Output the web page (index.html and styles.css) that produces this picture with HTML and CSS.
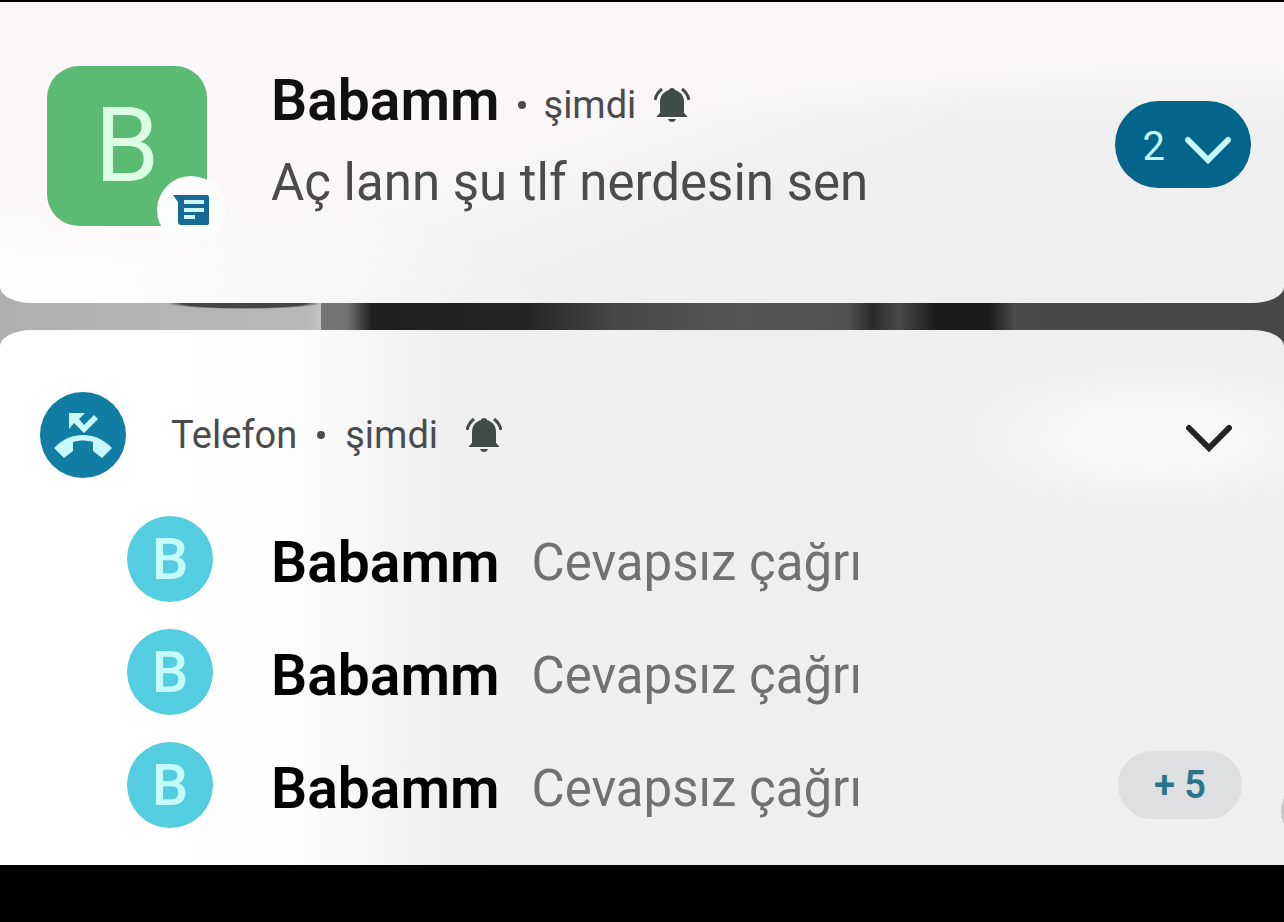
FILE: index.html
```html
<!DOCTYPE html>
<html lang="tr">
<head>
    <meta charset="UTF-8">
    <meta name="viewport" content="width=device-width, initial-scale=1.0">
    <title>Bildirimler</title>
    <link rel="stylesheet" href="styles.css">
</head>
<body>

<svg class="sprite" aria-hidden="true">
    <symbol id="bell" viewBox="0 0 36 36">
        <path d="M18 1c2 0 3 1 3 2 6 2 9 6 9 12v11l3 3v1H3v-1l3-3V15C6 9 9 5 15 3c0-1 1-2 3-2z" fill="currentColor"/>
        <path d="M14 32h8c-1 4-7 4-8 0z" fill="currentColor"/>
        <path d="M8 2C4 5 2 8 1 13M28 2c4 3 6 6 7 11" fill="none" stroke="currentColor" stroke-width="3"/>
    </symbol>
    <symbol id="chevron" viewBox="0 0 46 36">
        <path d="M3 11l20 20 20-20" fill="none" stroke="currentColor" stroke-width="6" stroke-linecap="round"/>
    </symbol>
</svg>

<main class="shade">
    <section class="card message">
        <div class="contact">
            <span>B</span>
            <div class="app-badge">
                <svg viewBox="0 0 36 30" width="36" height="30">
                    <path d="M0 0h34q2 0 2 2v26q0 2-2 2H8q-3 0-3-3V7z" fill="#176a92"/>
                    <path d="M11 7h20M11 15h20M11 22h11" stroke="#c9f6ff" stroke-width="4"/>
                </svg>
            </div>
        </div>
        <div class="message-body">
            <div class="title">
                <h2 class="name">Babamm</h2>
                <span class="dot"></span>
                <span class="meta">şimdi</span>
                <svg class="bell"><use href="#bell"/></svg>
            </div>
            <p class="text">Aç lann şu tlf nerdesin sen</p>
        </div>
        <button type="button" class="expand-count" aria-label="2 mesajı genişlet">
            2
            <svg class="chevron"><use href="#chevron"/></svg>
        </button>
    </section>

    <section class="card calls">
        <header class="calls-header">
            <div class="app-icon">
                <svg viewBox="0 0 86 86" width="86" height="86">
                    <path d="M14 56C24 46 33 43 43 43s19 3 29 13L62 66l-9-7v-9c-7-2-13-2-20 0v9l-9 7z" fill="#c8f9ff"/>
                    <path d="M29 21h16l-6 6 5 6 10-10 4 4-14 14-10-10-5 6z" fill="#c8f9ff"/>
                </svg>
            </div>
            <h3 class="meta">Telefon</h3>
            <span class="dot"></span>
            <span class="meta">şimdi</span>
            <svg class="bell"><use href="#bell"/></svg>
            <button type="button" class="expand" aria-label="Genişlet">
                <svg class="chevron"><use href="#chevron"/></svg>
            </button>
        </header>
        <ul class="call-list">
            <li>
                <span class="avatar">B</span>
                <strong class="name">Babamm</strong>
                <span class="status">Cevapsız çağrı</span>
            </li>
            <li>
                <span class="avatar">B</span>
                <strong class="name">Babamm</strong>
                <span class="status">Cevapsız çağrı</span>
            </li>
            <li>
                <span class="avatar">B</span>
                <strong class="name">Babamm</strong>
                <span class="status">Cevapsız çağrı</span>
                <button type="button" class="more">+ 5</button>
            </li>
        </ul>
        <span class="edge-handle"></span>
    </section>
</main>

</body>
</html>
```
FILE: styles.css
```css
* {
    box-sizing: border-box;
}

body {
    margin: 0;
    background-color: #000000;
    font-family: Roboto, "Liberation Sans", sans-serif;
    color: #4a4b4d;
}

h2, h3, p, ul {
    margin: 0;
    padding: 0;
}

button {
    border: none;
    padding: 0;
    font-family: inherit;
    cursor: pointer;
}

.sprite {
    display: none;
}

/* wallpaper shows between the cards */
.shade {
    display: flex;
    flex-direction: column;
    gap: 27px;
    margin-top: 2px;
    background:
        radial-gradient(ellipse 6% 6px at 19% 301px, #444444 80%, transparent),
        linear-gradient(to right, #b0b0b0 0%, #b8b8b8 24%, #c4c4c4 25%, #747474 25%, #747474 27%, #202020 29%, #242625 41%, #464847 48%, #555755 58%, #505050 66%, #2b2b2b 68%, #484848 70%, #1a1a1a 73%, #1a1a1a 77%, #4b494b 79%, #484848 100%);
}

.card {
    position: relative;
    overflow: hidden;
}

.message {
    display: flex;
    align-items: flex-start;
    padding: 64px 33px 77px 47px;
    border-radius: 0 0 32px 32px / 0 0 16px 16px;
    background:
        radial-gradient(ellipse at 0% 100%, #ffffff 0%, transparent 30%),
        linear-gradient(to bottom, #fbf7f8 15%, transparent 40%),
        linear-gradient(160deg, #fbf8f9 0%, #fbf7f8 40%, #f0f0f1 60%, #efeff0 100%);
}

.contact {
    position: relative;
    display: flex;
    align-items: center;
    justify-content: center;
    width: 160px;
    height: 160px;
    margin-right: 64px;
    border-radius: 32px;
    background-color: #5bbb75;
    color: #dcffe4;
    font-size: 104px;
    line-height: 160px;
}

.app-badge {
    position: absolute;
    right: -18px;
    bottom: -18px;
    display: flex;
    align-items: center;
    justify-content: center;
    width: 68px;
    height: 68px;
    border-radius: 50%;
    background-color: #fcfdfd;
}

.message-body {
    flex: 1;
    padding-top: 3px;
}

.title {
    display: flex;
    align-items: center;
}

.name {
    font-size: 57px;
    font-weight: 600;
    line-height: 64px;
    color: #111111;
}

.dot {
    width: 8px;
    height: 8px;
    margin: 0 18px;
    border-radius: 50%;
    background-color: #4a4b4d;
}

.meta {
    font-size: 38px;
    font-weight: 400;
    line-height: 48px;
}

.bell {
    width: 36px;
    height: 36px;
    margin-left: 18px;
    color: #414b49;
}

.title .dot,
.title .meta,
.title .bell {
    margin-top: 8px;
}

.text {
    padding-top: 18px;
    font-size: 51px;
    line-height: 64px;
}

.chevron {
    width: 46px;
    height: 36px;
}

.expand-count {
    display: flex;
    align-items: center;
    justify-content: flex-end;
    gap: 20px;
    width: 136px;
    height: 87px;
    margin-top: 35px;
    padding: 4px 20px 0 0;
    border-radius: 44px;
    background-color: #04658a;
    color: #c8f9ff;
    font-size: 40px;
}

.calls {
    padding: 62px 42px 37px 40px;
    border-radius: 32px 32px 0 0 / 16px 16px 0 0;
    background:
        radial-gradient(ellipse 200px 80px at 90% 20%, #f8f8f9 30%, transparent),
        linear-gradient(to right, #ffffff 0%, #fefefe 22%, #f1f0f1 34%, #efefef 60%, #f0eff0 100%);
}

.calls-header {
    display: flex;
    align-items: center;
}

.app-icon {
    display: flex;
    width: 86px;
    height: 86px;
    margin-right: 45px;
    border-radius: 50%;
    background-color: #127da4;
}

.calls-header .dot {
    margin: 0 20px;
}

.calls-header .bell {
    margin-left: 28px;
}

.expand {
    display: flex;
    margin-left: auto;
    margin-right: 10px;
    background: none;
    color: #222426;
}

.call-list {
    display: flex;
    flex-direction: column;
    gap: 27px;
    padding: 38px 0 0 87px;
    list-style: none;
}

.call-list li {
    display: flex;
    align-items: center;
}

.call-list .name {
    padding-top: 8px;
    color: #000000;
}

.avatar {
    width: 86px;
    height: 86px;
    margin-right: 58px;
    border-radius: 50%;
    background-color: #54cde0;
    color: #c5fbfa;
    font-size: 58px;
    font-weight: 500;
    line-height: 86px;
    text-align: center;
}

.status {
    padding-top: 8px;
    margin-left: 32px;
    font-size: 51px;
    line-height: 64px;
    color: #707173;
}

.more {
    width: 124px;
    height: 68px;
    margin-left: auto;
    border-radius: 34px;
    background-color: #dedfe0;
    color: #2b7489;
    font-size: 38px;
    font-weight: 600;
}

.edge-handle {
    position: absolute;
    right: -57px;
    bottom: 24px;
    width: 60px;
    height: 60px;
    border-radius: 50%;
    background-color: #c8c8c8;
}
```
